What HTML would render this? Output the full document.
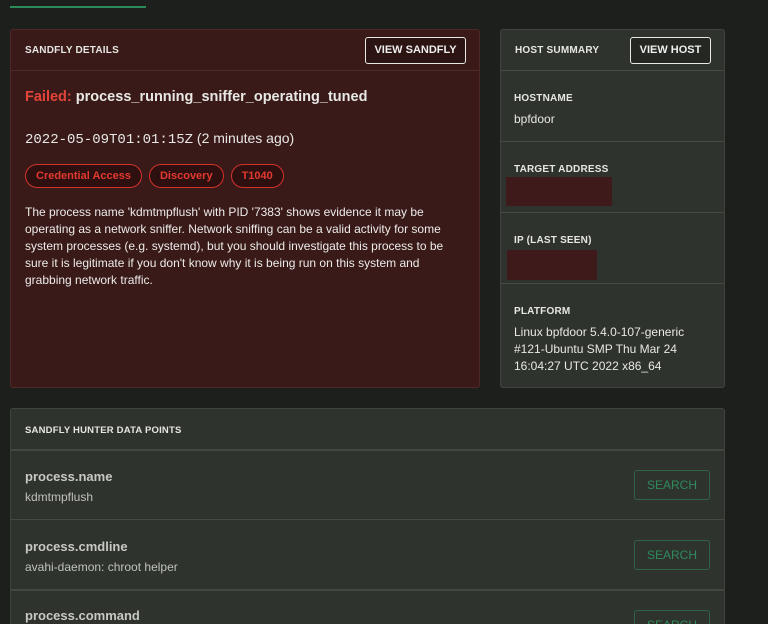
<!DOCTYPE html><html><head><style>
*{margin:0;padding:0;box-sizing:border-box}
html,body{width:768px;height:624px;overflow:hidden}
body{background:#1c1f1b;font-family:"Liberation Sans",sans-serif;color:#e8e8e4;position:relative}
.a{position:absolute}
.card{position:absolute;border:1px solid #40443e;border-radius:3px}
.lbl{font-size:10px;font-weight:bold;letter-spacing:0.2px;color:#e6e6e2}
.btn{position:absolute;border:1.5px solid #e8e8e4;border-radius:3px;font-size:11px;font-weight:bold;text-align:center;color:#eee;background:#252822}
.hr{position:absolute;left:0;right:0;height:1px;background:#454a43}
.tag{display:inline-block;border:1.5px solid #d2332b;border-radius:13px;color:#e3392f;font-size:11px;font-weight:bold;padding:5px 10px;margin-right:7px;background:#2e1010}
.red{position:absolute;background:#3f1a1a}
.k{font-size:13px;font-weight:bold;color:#c8c9c4}
.v{font-size:12px;color:#c0c1bc}
.s{position:absolute;right:14px;width:76px;height:30px;border:1px solid #2f6346;border-radius:3px;color:#2f8a5c;font-size:12px;text-align:center;line-height:28px}
</style></head><body>
<div class="a" style="left:10px;top:6px;width:136px;height:2px;background:#2a8a5a"></div>
<div class="card" style="left:10px;top:29px;width:470px;height:359px;background:#391a19;border-color:#4d2826">
 <div class="a lbl" style="left:14px;top:15px">SANDFLY DETAILS</div>
 <div class="btn" style="left:354px;top:7px;width:101px;height:27px;line-height:24px;background:#2b1412">VIEW SANDFLY</div>
 <div class="hr" style="top:40px;background:#4e2a28"></div>
 <div class="a" style="left:14px;top:59px;font-size:14.5px;font-weight:bold"><span style="color:#e5443a">Failed:</span> process_running_sniffer_operating_tuned</div>
 <div class="a" style="left:14px;top:100px;font-size:14px"><span style="font-family:'Liberation Mono',monospace">2022-05-09T01:01:15Z</span> (2 minutes ago)</div>
 <div class="a" style="left:14px;top:134px;white-space:nowrap"><span class="tag">Credential Access</span><span class="tag">Discovery</span><span class="tag">T1040</span></div>
 <div class="a" style="left:14px;top:174px;width:440px;font-size:12px;line-height:17px;color:#ecebe8">The process name 'kdmtmpflush' with PID '7383' shows evidence it may be operating as a network sniffer. Network sniffing can be a valid activity for some system processes (e.g. systemd), but you should investigate this process to be sure it is legitimate if you don't know why it is being run on this system and grabbing network traffic.</div>
</div>
<div class="card" style="left:500px;top:29px;width:225px;height:359px;background:#2f332d">
 <div class="a lbl" style="left:14px;top:15px">HOST SUMMARY</div>
 <div class="btn" style="left:129px;top:7px;width:81px;height:27px;line-height:24px">VIEW HOST</div>
 <div class="hr" style="top:40px"></div>
 <div class="a lbl" style="left:13px;top:63px">HOSTNAME</div>
 <div class="a" style="left:13px;top:82px;font-size:12px">bpfdoor</div>
 <div class="hr" style="top:111px"></div>
 <div class="a lbl" style="left:13px;top:134px">TARGET ADDRESS</div>
 <div class="red" style="left:5px;top:147px;width:106px;height:29px"></div>
 <div class="hr" style="top:182px"></div>
 <div class="a lbl" style="left:13px;top:205px">IP (LAST SEEN)</div>
 <div class="red" style="left:6px;top:220px;width:90px;height:30px"></div>
 <div class="hr" style="top:253px"></div>
 <div class="a lbl" style="left:13px;top:276px">PLATFORM</div>
 <div class="a" style="left:13px;top:294px;font-size:12px;line-height:17px;width:200px">Linux bpfdoor 5.4.0-107-generic #121-Ubuntu SMP Thu Mar 24 16:04:27 UTC 2022 x86_64</div>
</div>
<div class="card" style="left:10px;top:408px;width:715px;height:230px;background:#2f332d">
 <div class="a lbl" style="left:14px;top:16px;font-size:9.5px">SANDFLY HUNTER DATA POINTS</div>
 <div class="hr" style="top:40px;height:2px;background:#424740"></div>
 <div class="a k" style="left:14px;top:60px">process.name</div>
 <div class="a v" style="left:14px;top:81px">kdmtmpflush</div>
 <div class="s" style="top:61px">SEARCH</div>
 <div class="hr" style="top:110px"></div>
 <div class="a k" style="left:14px;top:130px">process.cmdline</div>
 <div class="a v" style="left:14px;top:151px">avahi-daemon: chroot helper</div>
 <div class="s" style="top:131px">SEARCH</div>
 <div class="hr" style="top:180px;height:2px;background:#424740"></div>
 <div class="a k" style="left:14px;top:199px">process.command</div>
 <div class="s" style="top:201px">SEARCH</div>
</div>
</body></html>
